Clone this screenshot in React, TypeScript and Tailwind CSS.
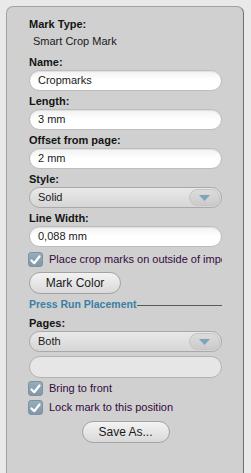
import React from "react";

function Label({ children }: { children: React.ReactNode }) {
  return <div className="h-[14px] text-[11px] leading-[13px] font-bold text-[#141414]">{children}</div>;
}

function TextInput({ value }: { value: string }) {
  return (
    <div className="h-[21px] w-[193px] rounded-full border border-[#bdbdbd] bg-gradient-to-b from-[#f2f2f2] via-white to-white pl-[8px] text-[11px] leading-[19px] text-[#1a1a1a] shadow-[inset_0_1px_1px_rgba(0,0,0,0.08)]">
      {value}
    </div>
  );
}

function Select({ value }: { value: string }) {
  return (
    <div className="flex h-[21px] w-[193px] items-center justify-between rounded-full border border-[#a9a9a9] bg-gradient-to-b from-[#e9e9e9] to-[#d6d6d6] pl-[8px] pr-[1px] text-[11px] text-[#1a1a1a]">
      <span>{value}</span>
      <span className="flex h-[17px] w-[31px] items-center justify-center rounded-full border border-[#c4c4c4] bg-gradient-to-b from-[#dcdcdc] to-[#cbcbcb]">
        <svg width="11" height="6" viewBox="0 0 11 6">
          <path d="M0 0 L11 0 L5.5 6 Z" fill="#7ea3bb" />
        </svg>
      </span>
    </div>
  );
}

function Check({ label }: { label: string }) {
  return (
    <div className="flex h-[15px] w-[194px] items-center overflow-hidden whitespace-nowrap -ml-[1px]">
      <span className="flex h-[15px] w-[15px] shrink-0 items-center justify-center rounded-[3px] border border-[#7d93a2] bg-gradient-to-b from-[#98adba] to-[#7f97a7]">
        <svg width="11" height="10" viewBox="0 0 11 10">
          <path d="M1.5 5.5 L4.2 8.2 L9.5 1.5" stroke="white" strokeWidth="2.2" fill="none" strokeLinecap="round" strokeLinejoin="round" />
        </svg>
      </span>
      <span className="ml-[6px] text-[11px] text-[#330a3d]">{label}</span>
    </div>
  );
}

function PillButton({ label, width }: { label: string; width: string }) {
  return (
    <div
      className={`flex h-[22px] ${width} items-center justify-center rounded-full border border-[#a3a3a3] bg-gradient-to-b from-[#f3f3f3] to-[#d9d9d9] text-[12px] text-[#1a1a1a]`}
    >
      {label}
    </div>
  );
}

export default function App() {
  return (
    <div
      className="h-[473px] w-[251px] overflow-hidden bg-[#e9e9e9]"
      style={{ fontFamily: '"Liberation Sans", Arial, sans-serif' }}
    >
      <div className="ml-[6px] mt-[6px] h-[480px] w-[238px] rounded-t-[7px] border border-[#a2a2a2] border-r-[#6f6f6f] bg-[#d0d0d0] pl-[22px] pt-[11px]">
        <Label>Mark Type:</Label>
        <div className="mt-[3px] h-[21px] pl-[4px] text-[11px] leading-[13px] text-[#1a1a1a]">Smart Crop Mark</div>

        <div className="flex flex-col gap-[4px]">
          <div>
            <Label>Name:</Label>
            <TextInput value="Cropmarks" />
          </div>
          <div>
            <Label>Length:</Label>
            <TextInput value="3 mm" />
          </div>
          <div>
            <Label>Offset from page:</Label>
            <TextInput value="2 mm" />
          </div>
          <div>
            <Label>Style:</Label>
            <Select value="Solid" />
          </div>
          <div>
            <Label>Line Width:</Label>
            <TextInput value="0,088 mm" />
          </div>
        </div>

        <div className="mt-[5px]">
          <Check label="Place crop marks on outside of imposition" />
        </div>
        <div className="mt-[5px]">
          <PillButton label="Mark Color" width="w-[92px]" />
        </div>

        <div className="mt-[4px] flex h-[14px] w-[193px] items-center">
          <span className="text-[10.5px] font-bold text-[#3a7fa6]">Press Run Placement</span>
          <span className="ml-[1px] h-px flex-1 bg-[#5a5a5a]" />
        </div>

        <div className="mt-[5px]">
          <Label>Pages:</Label>
          <Select value="Both" />
        </div>
        <div className="mt-[4px] h-[22px] w-[193px] rounded-full border border-[#b3b3b3] bg-[#e6e6e6]" />

        <div className="mt-[3px] flex flex-col gap-[4px]">
          <Check label="Bring to front" />
          <Check label="Lock mark to this position" />
        </div>

        <div className="mt-[6px] flex w-[193px] justify-center">
          <PillButton label="Save As..." width="w-[88px]" />
        </div>
      </div>
    </div>
  );
}
